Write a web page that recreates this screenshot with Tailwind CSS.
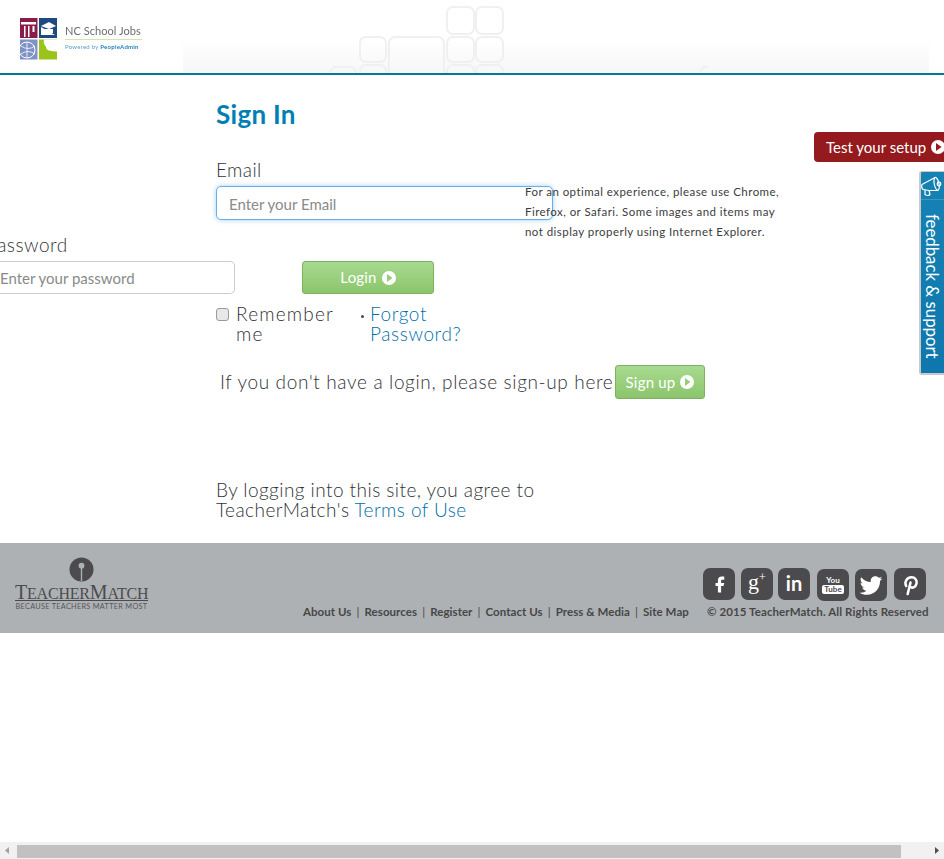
<!DOCTYPE html>
<html lang="en">
<head>
<meta charset="utf-8">
<title>NC School Jobs - Sign In</title>
<script src="https://cdn.jsdelivr.net/npm/@tailwindcss/browser@4"></script>
</head>
<body class="m-0 bg-white">
<div class="relative flex flex-col h-[859px] w-[944px] overflow-hidden bg-white text-[#303338] font-['Lato','Liberation_Sans',sans-serif]">

  <!-- Header -->
  <header class="relative h-[75px] shrink-0 border-b-[2px] border-[#007a9c] bg-white">
    <div class="absolute left-[183px] top-[38px] w-[746px] h-[35px] bg-gradient-to-b from-white to-[#f7f7f7]"></div>
    <svg class="absolute left-0 top-0 blur-[0.4px]" width="944" height="73" fill="none" stroke="#f0f0f0" stroke-width="2">
      <rect x="447" y="7" width="27" height="27" rx="6"/>
      <rect x="476" y="7" width="27" height="27" rx="6"/>
      <rect x="360" y="37" width="26" height="25" rx="6"/>
      <rect x="389" y="37" width="55" height="50" rx="6"/>
      <rect x="447" y="37" width="27" height="25" rx="6"/>
      <rect x="476" y="37" width="27" height="25" rx="6"/>
      <rect x="447" y="65" width="27" height="25" rx="6"/>
      <rect x="476" y="65" width="27" height="25" rx="6"/>
      <rect x="330" y="67" width="26" height="25" rx="6"/>
      <rect x="360" y="65" width="26" height="25" rx="6"/>
      <path d="M700 72 q2 -5 8 -6"/>
    </svg>
    <div class="absolute left-[15px] top-[15px] w-[133px] h-[49px] bg-white flex items-start pl-[5px] pt-[3px]">
      <svg width="37" height="42" viewBox="0 0 37 42" class="shrink-0 blur-[0.4px]">
        <rect x="0" y="0" width="17.500" height="20" fill="#8a1c4a"/>
        <rect x="19" y="0" width="18" height="20" fill="#1f4a80"/>
        <rect x="0" y="21.500" width="17.500" height="20" fill="#7e92c6"/>
        <rect x="19" y="21.500" width="18" height="20" fill="#9ac31c"/>
        <path d="M1 4h15v2.500H1zM4 8h1.500v11H4zM8 8h1.500v11H8zM12.500 8h2v6h-2z" fill="#fff"/>
        <path d="M21 8l8-4 7 4-7 3zM25 11v4h8v-4M21 9v8h14" fill="#fff"/>
        <circle cx="7" cy="32" r="8" fill="none" stroke="#fff" stroke-width="1"/>
        <path d="M1 28q7 5 14 0M1 36q7-5 14 0M7 24v16" fill="none" stroke="#fff" stroke-width="0.800"/>
        <path d="M24 21.500q-1 5 2 7q0 3 3 4q4 1 8 1v-12z" fill="#fff"/>
      </svg>
      <div class="ml-[8px] mt-[6px] w-[77px] blur-[0.3px]">
        <div class="text-[11px] leading-[14px] text-[#6a6d70] whitespace-nowrap tracking-[0.05px]">NC School Jobs</div>
        <div class="h-[1px] bg-[#cfe6b4] mt-[1px]"></div>
        <div class="text-[6px] leading-[8px] mt-[3px] text-[#5c9fc5] whitespace-nowrap tracking-[0.25px]">Powered by <b class="text-[#1f7fb5]">PeopleAdmin</b></div>
      </div>
    </div>
  </header>

  <!-- Main -->
  <main class="relative h-[468px] shrink-0 pl-[216px]">
    <h1 class="mt-[23px] text-[26px] leading-[32px] font-bold text-[#007fb2] tracking-[0.3px]">Sign In</h1>
    <label class="block mt-[30px] text-[19px] leading-[20px] font-light tracking-[0.4px]">Email</label>
    <input type="text" placeholder="Enter your Email" class="block mt-[6px] w-[337px] h-[34px] px-[12px] pt-[1px] text-[15px] bg-white rounded-[5px] border border-[#66afe9] shadow-[0_0_5px_rgba(102,175,233,0.6)] outline-none placeholder:text-[#8a8a8a]">
    <label class="block mt-[15px] -ml-[230px] text-[19px] leading-[20px] font-light tracking-[0.5px]">Password</label>
    <div class="mt-[6px] -ml-[216px] flex h-[33px]">
      <input type="text" placeholder="Enter your password" class="block w-[235px] h-[33px] pl-0 pr-[12px] text-[15px] bg-white rounded-r-[5px] border border-l-0 border-[#cccccc] outline-none placeholder:text-[#8a8a8a]">
      <button class="ml-[67px] w-[132px] h-[33px] flex items-center justify-center gap-[5px] rounded-[3px] border border-[#7cb25f] bg-gradient-to-b from-[#a7da8f] to-[#8cc56c] text-white text-[15px] tracking-[0.2px]">
        Login
        <svg width="14" height="14" viewBox="0 0 14 14"><circle cx="7" cy="7" r="7" fill="#fff"/><path d="M5 3l5.500 4-5.500 4z" fill="#97cd7b"/></svg>
      </button>
    </div>
    <div class="mt-[10px] flex items-start text-[19px] leading-[20px] font-light">
      <input type="checkbox" class="appearance-none mt-[4px] w-[13px] h-[13px] shrink-0 rounded-[3px] border border-[#9a9a9a] bg-[#e8e8e8]">
      <span class="ml-[7px] w-[110px] tracking-[1.2px]">Remember me</span>
      <span class="ml-[15px] mt-[11px] w-[3px] h-[3px] rounded-full bg-[#474a4e] shrink-0"></span>
      <a class="ml-[6px] w-[110px] text-[#006fa8] tracking-[0.6px]">Forgot Password?</a>
    </div>
    <div class="mt-[21px] ml-[4px] flex items-center h-[34px] text-[19px] font-light">
      <span class="whitespace-nowrap w-[395px] tracking-[0.65px]">If you don't have a login, please sign-up here</span>
      <button class="w-[90px] h-[34px] flex items-center justify-center gap-[5px] rounded-[3px] border border-[#7cb25f] bg-gradient-to-b from-[#a7da8f] to-[#8cc56c] text-white text-[15px] font-normal tracking-[0.2px]">
        Sign up
        <svg width="14" height="14" viewBox="0 0 14 14"><circle cx="7" cy="7" r="7" fill="#fff"/><path d="M5 3l5.500 4-5.500 4z" fill="#97cd7b"/></svg>
      </button>
    </div>
    <p class="mt-[81px] w-[340px] text-[19px] leading-[20px] font-light tracking-[0.45px]">By logging into this site, you agree to TeacherMatch's <a class="text-[#006fa8]">Terms of Use</a></p>

    <!-- Browser notice overlay -->
    <p class="absolute left-[525px] top-[107px] w-[262px] text-[11.500px] leading-[20px] text-[#3c3c3c] tracking-[0.45px]">For an optimal experience, please use Chrome, Firefox, or Safari. Some images and items may not display properly using Internet Explorer.</p>

    <!-- Test setup tab -->
    <a class="absolute left-[814px] top-[57px] w-[130px] h-[30px] flex items-center pl-[12px] gap-[5px] rounded-l-[4px] bg-[#941a1d] text-white text-[15px] whitespace-nowrap overflow-hidden">
      Test your setup
      <svg width="14" height="14" viewBox="0 0 14 14" class="shrink-0"><circle cx="7" cy="7" r="7" fill="#fff"/><path d="M5 3l5.500 4-5.500 4z" fill="#941a1d"/></svg>
    </a>

    <!-- Feedback tab -->
    <aside class="absolute left-[919px] top-[96px] w-[25px] h-[204px] rounded-l-[3px] border-l-[2px] border-b-[2px] border-t border-[#c9c9c9] bg-gradient-to-b from-[#1682b4] to-[#0e78ae] flex flex-col">
      <div class="h-[28px] shrink-0 border-b border-[#3f95bd] flex items-center justify-center">
        <svg width="24" height="25" viewBox="0 0 23 24" fill="none" stroke="#fff" stroke-width="1.200" stroke-linejoin="round">
          <path d="M1 11l13-7c3-1 6 11 3 13l-9 0-6-1q-2-2-1-5z"/>
          <path d="M14 4c-2 2-1 11 3 13"/>
          <path d="M4 16l0 5q3 2 5 0l-1-4"/>
          <circle cx="18" cy="10.500" r="1.800"/>
        </svg>
      </div>
      <div class="[writing-mode:vertical-rl] text-white text-[16.800px] leading-[23px] mt-[14px] whitespace-nowrap">feedback &amp; support</div>
    </aside>
  </main>

  <!-- Footer -->
  <footer class="relative h-[90px] shrink-0 bg-[#aeb1b3] text-[#474747]">
    <div class="absolute left-[15px] top-[14px] w-[133px] flex flex-col items-center">
      <svg width="25" height="25" viewBox="0 0 26 26" class="-ml-[1px]">
        <circle cx="13" cy="13" r="12.500" fill="#4b4b4d"/>
        <circle cx="13" cy="9" r="3" fill="#aeb1b3"/>
        <rect x="12.300" y="9" width="1.400" height="16" fill="#aeb1b3"/>
      </svg>
      <div class="w-full text-center font-['Liberation_Serif',serif] text-[20px] leading-[20px] h-[19px] -tracking-[0.2px] text-[#4b4b4d] border-b border-[#4b4b4d] whitespace-nowrap uppercase">T<span class="text-[16px]">eacher</span>M<span class="text-[16px]">atch</span></div>
      <div class="text-[7.300px] leading-[10px] mt-[1px] tracking-[0.3px] text-[#55575a] whitespace-nowrap">BECAUSE TEACHERS MATTER MOST</div>
    </div>

    <nav class="absolute left-[303px] top-[62px] flex items-center text-[11.500px] font-bold leading-[14px] whitespace-nowrap tracking-[0.05px]">
      <a>About Us</a><span class="mx-[5.100px] font-normal">|</span><a>Resources</a><span class="mx-[5.100px] font-normal">|</span><a>Register</a><span class="mx-[5.100px] font-normal">|</span><a>Contact Us</a><span class="mx-[5.100px] font-normal">|</span><a>Press &amp; Media</a><span class="mx-[5.100px] font-normal">|</span><a>Site Map</a>
    </nav>
    <div class="absolute left-[707px] top-[62px] text-[11.500px] font-bold leading-[14px] whitespace-nowrap tracking-[0.1px]">© 2015 TeacherMatch. All Rights Reserved</div>

    <div class="absolute left-[703px] top-[25px] flex items-start">
      <a class="w-[32px] h-[32px] rounded-[7px] bg-[#4b4b4d] flex items-center justify-center">
        <svg width="19" height="19" viewBox="0 0 24 24" fill="#fff"><path d="M18 2h-3a5 5 0 0 0-5 5v3H7v4h3v8h4v-8h3l1-4h-4V7a1 1 0 0 1 1-1h3z"/></svg>
      </a>
      <a class="ml-[6px] w-[32px] h-[32px] rounded-[7px] bg-[#4b4b4d] flex items-center justify-center text-white font-['Liberation_Serif',serif] text-[22px] leading-[18px] pb-[5px]">g<span class="text-[12px] leading-none -mt-[9px]">+</span></a>
      <a class="ml-[5px] w-[32px] h-[32px] rounded-[7px] bg-[#4b4b4d] flex items-center justify-center text-white font-bold text-[20px] leading-none pb-[2px]">in</a>
      <a class="ml-[7px] mt-[1px] w-[32px] h-[32px] rounded-[7px] bg-[#4b4b4d] flex flex-col items-center justify-center text-white font-bold">
        <span class="text-[8px] leading-[9px]">You</span>
        <span class="text-[8px] leading-[9px] px-[2px] rounded-[2px] bg-white text-[#4b4b4d]">Tube</span>
      </a>
      <a class="ml-[6px] mt-[1px] w-[32px] h-[32px] rounded-[7px] bg-[#4b4b4d] flex items-center justify-center">
        <svg width="26" height="26" viewBox="0 0 24 24" fill="#fff"><path d="M22.46,6C21.69,6.35 20.86,6.58 20,6.69C20.88,6.16 21.56,5.32 21.88,4.31C21.05,4.81 20.13,5.16 19.16,5.36C18.37,4.5 17.26,4 16,4C13.65,4 11.73,5.92 11.73,8.29C11.73,8.63 11.77,8.96 11.84,9.27C8.28,9.09 5.11,7.38 3,4.79C2.63,5.42 2.42,6.16 2.42,6.94C2.42,8.43 3.17,9.75 4.33,10.5C3.62,10.5 2.96,10.3 2.38,10C2.38,10 2.38,10 2.38,10.03C2.38,12.11 3.86,13.85 5.82,14.24C5.46,14.34 5.08,14.39 4.69,14.39C4.42,14.39 4.15,14.36 3.89,14.31C4.43,16 6,17.26 7.89,17.29C6.43,18.45 4.58,19.13 2.56,19.13C2.22,19.13 1.88,19.11 1.54,19.07C3.44,20.29 5.7,21 8.12,21C16,21 20.33,14.46 20.33,8.79C20.33,8.6 20.33,8.42 20.32,8.23C21.16,7.63 21.88,6.87 22.46,6Z"/></svg>
      </a>
      <a class="ml-[7px] w-[32px] h-[32px] rounded-[7px] bg-[#4b4b4d] flex items-center justify-center">
        <svg width="23" height="23" viewBox="0 0 24 24" fill="none" stroke="#fff" stroke-width="2.600" stroke-linecap="round"><path d="M9 22l3-12"/><path d="M7.500 13.500c-2-3 0-9 5.500-9 4 0 6 3 5.300 6.500-.8 4-4.800 5.500-6.800 3"/></svg>
      </a>
    </div>
  </footer>

  <div class="flex-1"></div>

  <!-- Horizontal scrollbar -->
  <div class="h-[17px] shrink-0 bg-[#f1f1f1] flex items-center">
    <svg width="17" height="17" viewBox="0 0 17 17" class="shrink-0"><path d="M9 5v7l-4-3.500z" fill="#a3a3a3"/></svg>
    <div class="w-[884px] h-[13px] mt-[1px] bg-[#c1c1c1]"></div>
    <div class="flex-1"></div>
    <svg width="17" height="17" viewBox="0 0 17 17" class="shrink-0"><path d="M8 5v7l4-3.500z" fill="#505050"/></svg>
  </div>
</div>
</body>
</html>
